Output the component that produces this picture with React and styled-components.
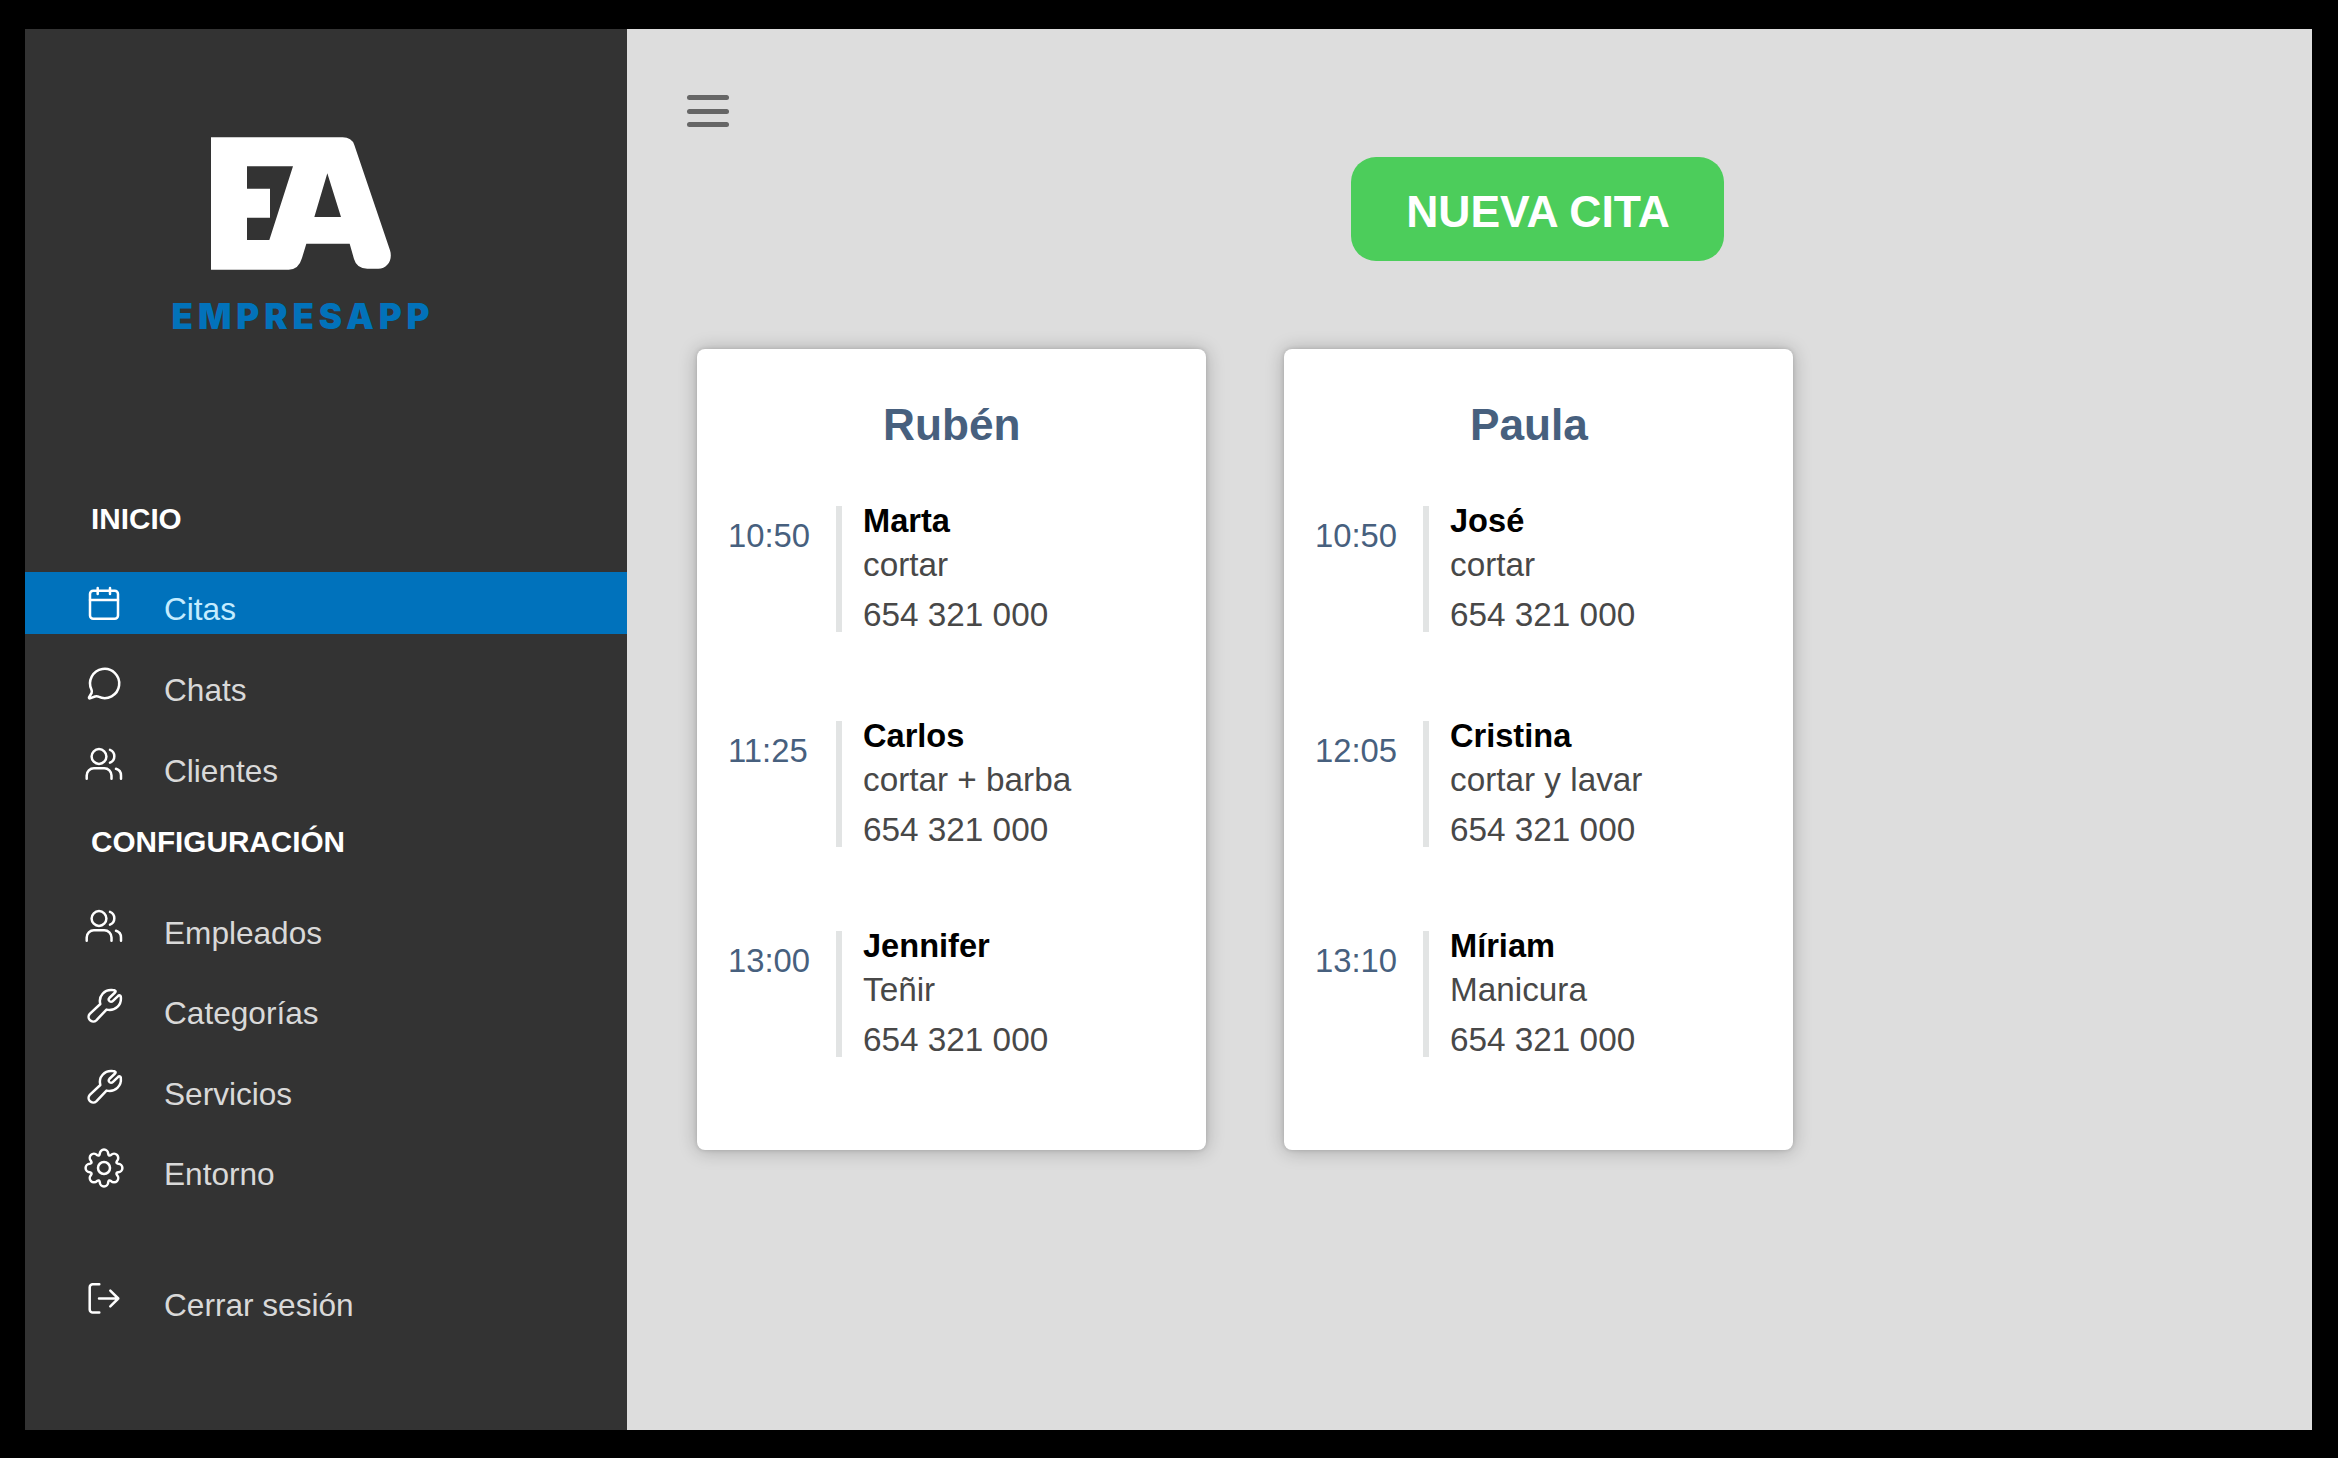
import React from "react";
import styled, { createGlobalStyle } from "styled-components";

const GlobalStyle = createGlobalStyle`
  * { box-sizing: border-box; }
  body {
    margin: 0;
    background: #000;
    font-family: "Liberation Sans", Arial, sans-serif;
  }
`;

const Frame = styled.div`
  width: 2338px;
  height: 1458px;
  padding: 29px 26px 28px 25px;
  background: #000;
  display: flex;
  overflow: hidden;
`;

const Sidebar = styled.aside`
  width: 602px;
  flex: none;
  background: #333;
  display: flex;
  flex-direction: column;
`;

const Brand = styled.div`
  height: 429px;
  width: 550px;
  padding-top: 108px;
  display: flex;
  flex-direction: column;
  align-items: center;
`;

const BrandMark = styled.svg`
  width: 180px;
  height: 133px;
  margin-left: 2px;
  fill: #fff;
`;

const BrandName = styled.div`
  margin-top: 24px;
  margin-left: 6px;
  font-family: Inter, sans-serif;
  font-weight: 900;
  font-size: 35px;
  line-height: 44px;
  letter-spacing: 4.9px;
  color: #0272ba;
`;

const SectionTitle = styled.h2`
  margin: 0;
  padding-left: 66px;
  font-size: 29.7px;
  font-weight: 700;
  line-height: 30px;
  height: 30px;
  margin-top: ${(p) => p.$before}px;
  margin-bottom: ${(p) => p.$after}px;
  color: #fff;
`;

const Nav = styled.nav`
  display: flex;
  flex-direction: column;
  gap: ${(p) => p.$gap || 19}px;
  margin-top: ${(p) => p.$before || 0}px;
`;

const NavItem = styled.a`
  height: 62px;
  padding-left: 59px;
  display: flex;
  align-items: center;
  gap: 40px;
  background: ${(p) => (p.$active ? "#0072bc" : "transparent")};
  color: ${(p) => (p.$active ? "#c4ecff" : "#d9d9d9")};
`;

const NavLabel = styled.span`
  font-size: 31.6px;
  line-height: 36px;
  padding-top: 12px;
`;

const NavIcon = styled.svg`
  width: 40px;
  height: 40px;
  flex: none;
  fill: none;
  stroke: #fff;
  stroke-width: 2.5;
  stroke-linecap: round;
  stroke-linejoin: round;
`;

const Main = styled.main`
  flex: 1;
  background: #ddd;
  display: flex;
  flex-direction: column;
  align-items: flex-start;
`;

const MenuButton = styled.button`
  width: 42px;
  height: 32px;
  margin: 66px 0 0 60px;
  padding: 0;
  border: 0;
  background: none;
  display: flex;
  flex-direction: column;
  justify-content: space-between;
`;

const MenuBar = styled.span`
  height: 5px;
  border-radius: 3px;
  background: #666;
`;

const NewButton = styled.button`
  width: 373px;
  height: 104px;
  margin: 30px 0 0 723.5px;
  padding: 5px 0 0 2px;
  border: 0;
  border-radius: 25px;
  background: #4ccd5b;
  color: #fff;
  font-family: inherit;
  font-weight: 700;
  font-size: 44.5px;
  line-height: 52px;
`;

const Board = styled.section`
  display: flex;
  gap: 78px;
  margin: 88px 0 0 70px;
`;

const Card = styled.article`
  width: 509px;
  height: 801px;
  border-radius: 8px;
  background: #fff;
  box-shadow: 0 1px 18px 1px rgba(0, 0, 0, 0.22), 0 0 4px rgba(0, 0, 0, 0.15);
`;

const CardTitle = styled.h1`
  margin: 51px 0 56px;
  padding-left: 186px;
  font-size: 44.2px;
  font-weight: 700;
  line-height: 50px;
  color: #47607e;
`;

const Slots = styled.div`
  display: flex;
  flex-direction: column;
`;

const Slot = styled.div`
  display: flex;
  height: 126px;
  margin-bottom: ${(p) => p.$after}px;
  padding-left: 31px;
`;

const Time = styled.time`
  width: 108px;
  padding-top: 11px;
  font-size: 32.8px;
  line-height: 38px;
  color: #47607e;
`;

const Details = styled.div`
  border-left: 6px solid #e2e4e4;
  padding-left: 21px;
  white-space: nowrap;
  color: #484848;
`;

const Client = styled.div`
  font-size: 32.6px;
  font-weight: 700;
  line-height: 29px;
  color: #000;
`;

const Service = styled.div`
  font-size: 33.3px;
  line-height: 59px;
`;

const Phone = styled.div`
  font-size: 33.3px;
  line-height: 41px;
`;

const gearOutline = (() => {
  const at = (x, y, k) => {
    const a = (k * Math.PI) / 4;
    const px = 20 + x * Math.cos(a) - y * Math.sin(a);
    const py = 20 + x * Math.sin(a) + y * Math.cos(a);
    return `${px.toFixed(2)} ${py.toFixed(2)}`;
  };
  let d = `M${at(-4.2, -14.2, 0)}`;
  for (let k = 0; k < 8; k += 1) {
    d += `A4.2 4.2 0 0 1 ${at(4.2, -14.2, k)}Q${at(4.7, -11.4, k)} ${at(-4.2, -14.2, k + 1)}`;
  }
  return `${d}Z`;
})();

const icons = {
  calendar: (
    <>
      <rect x="6" y="7.7" width="28" height="28" rx="3.2" />
      <path d="M6 17H34M13.7 4.9V11M26 4.9V11" />
    </>
  ),
  chat: (
    <path d="M7.5 25.8A14.6 14.6 0 1 1 14.5 32.7C13.3 32.1 12.3 32.1 11 32.5L5.9 34.4C5.2 34.6 4.8 34.1 5 33.5L7.6 29C8 27.8 8 27 7.5 25.8Z" />
  ),
  users: (
    <>
      <circle cx="15" cy="11.5" r="7.4" />
      <path d="M26 4.9A6.9 6.9 0 0 1 26 17.7M2.7 33.8V30.5A7.2 7.2 0 0 1 9.9 23.3H20.3A7.2 7.2 0 0 1 27.5 30.5V33.8M32 23.8A7 7 0 0 1 37 30.5V33.8" />
    </>
  ),
  wrench: (
    <path d="M31 5.5L25.3 11C24 12.4 24.9 14.7 26.9 14.7C27.8 14.7 28.4 14.4 29 13.8L34.2 8.8C35.2 8 36.6 8.4 36.8 9.8C37.8 17.8 31.5 24.5 22.5 22.6L12.3 33.3A4.6 4.6 0 0 1 5.8 26.8L16.3 17C14.2 9.2 20.5 2.2 28.5 3.1C30.8 3.3 32.6 4 31 5.5Z" />
  ),
  gear: (
    <>
      <path d={gearOutline} />
      <circle cx="20" cy="20" r="6" />
    </>
  ),
  logout: (
    <path d="M15.3 5.3H8.7A3 3 0 0 0 5.7 8.3V30.6A3 3 0 0 0 8.7 33.6H15.3M15 19.5H34.3M26.3 11.7L34.3 19.5L26.3 27.3" />
  ),
};

const startItems = [
  { icon: "calendar", label: "Citas", active: true },
  { icon: "chat", label: "Chats" },
  { icon: "users", label: "Clientes" },
];

const configItems = [
  { icon: "users", label: "Empleados" },
  { icon: "wrench", label: "Categorías" },
  { icon: "wrench", label: "Servicios" },
  { icon: "gear", label: "Entorno" },
];

const phone = "654 321 000";

const staff = [
  {
    name: "Rubén",
    slots: [
      { time: "10:50", client: "Marta", service: "cortar" },
      { time: "11:25", client: "Carlos", service: "cortar + barba" },
      { time: "13:00", client: "Jennifer", service: "Teñir" },
    ],
  },
  {
    name: "Paula",
    slots: [
      { time: "10:50", client: "José", service: "cortar" },
      { time: "12:05", client: "Cristina", service: "cortar y lavar" },
      { time: "13:10", client: "Míriam", service: "Manicura" },
    ],
  },
];

const gaps = [88.6, 84.8, 0];

function Item({ icon, label, active }) {
  return (
    <NavItem $active={active}>
      <NavIcon viewBox="0 0 40 40">{icons[icon]}</NavIcon>
      <NavLabel>{label}</NavLabel>
    </NavItem>
  );
}

export default function App() {
  return (
    <>
      <GlobalStyle />
      <Frame>
        <Sidebar>
          <Brand>
            <BrandMark viewBox="213 82 540 399">
              <path
                fillRule="evenodd"
                d="M213 83H608Q635 83 643 106L750 422C759 450 742 477 715 477H682Q650 477 642 448L629 402H499L486 445Q476 480 446 480H213ZM321 170V237H390V324H321V391H388L459 170ZM562 191L523 322H603Z"
              />
            </BrandMark>
            <BrandName>EMPRESAPP</BrandName>
          </Brand>
          <SectionTitle $before={46} $after={38.4}>INICIO</SectionTitle>
          <Nav>
            {startItems.map((i) => (
              <Item key={i.label} {...i} />
            ))}
          </Nav>
          <SectionTitle $before={30.6} $after={39}>CONFIGURACIÓN</SectionTitle>
          <Nav $gap={18.4}>
            {configItems.map((i) => (
              <Item key={i.label} {...i} />
            ))}
          </Nav>
          <Nav $before={69}>
            <Item icon="logout" label="Cerrar sesión" />
          </Nav>
        </Sidebar>
        <Main>
          <MenuButton aria-label="Menú">
            <MenuBar />
            <MenuBar />
            <MenuBar />
          </MenuButton>
          <NewButton>NUEVA CITA</NewButton>
          <Board>
            {staff.map((s) => (
              <Card key={s.name}>
                <CardTitle>{s.name}</CardTitle>
                <Slots>
                  {s.slots.map((slot, i) => (
                    <Slot key={slot.time} $after={gaps[i]}>
                      <Time>{slot.time}</Time>
                      <Details>
                        <Client>{slot.client}</Client>
                        <Service>{slot.service}</Service>
                        <Phone>{phone}</Phone>
                      </Details>
                    </Slot>
                  ))}
                </Slots>
              </Card>
            ))}
          </Board>
        </Main>
      </Frame>
    </>
  );
}
